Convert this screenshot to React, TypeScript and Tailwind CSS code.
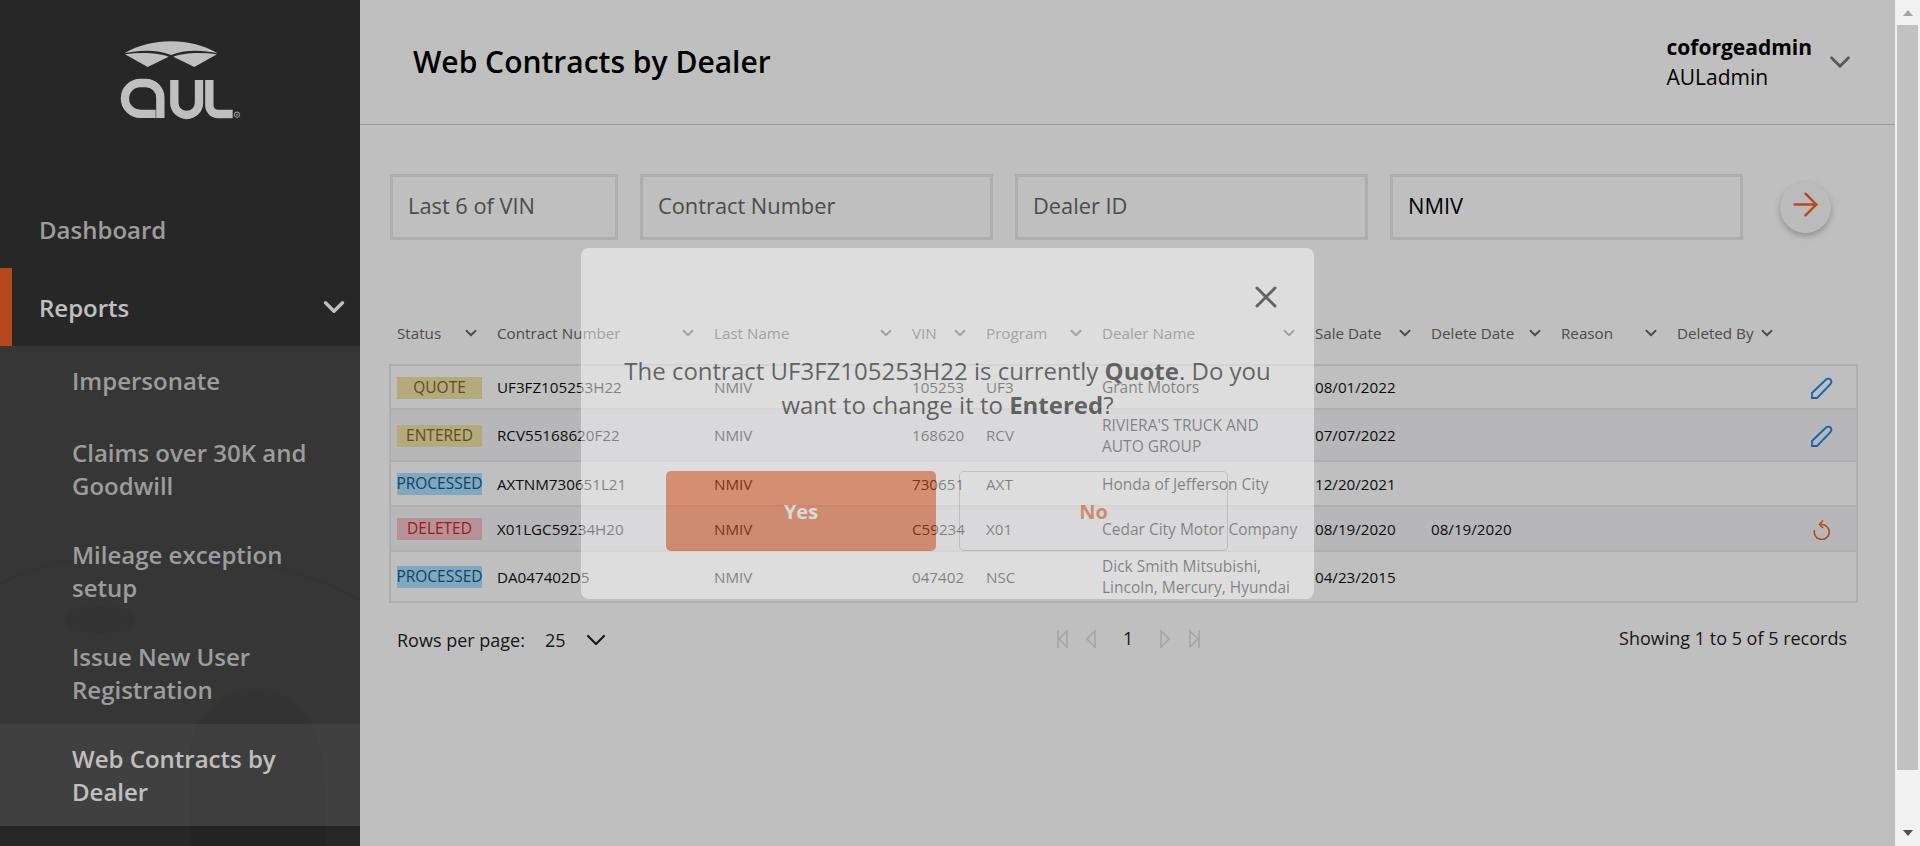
import { ChevronDown, X, ArrowRight } from 'lucide-react'

const font = { fontFamily: '"Open Sans", "Noto Sans", sans-serif' }

const columns = [
  { label: 'Status', w: 'w-[100px]' },
  { label: 'Contract Number', w: 'w-[217px]' },
  { label: 'Last Name', w: 'w-[198px]' },
  { label: 'VIN', w: 'w-[74px]' },
  { label: 'Program', w: 'w-[116px]' },
  { label: 'Dealer Name', w: 'w-[213px]' },
  { label: 'Sale Date', w: 'w-[116px]' },
  { label: 'Delete Date', w: 'w-[130px]' },
  { label: 'Reason', w: 'w-[116px]' },
  { label: 'Deleted By', w: 'w-[116px]' },
]

const badgeStyles: Record<string, string> = {
  QUOTE: 'bg-[#f2e3a4] text-[#7a6a24]',
  ENTERED: 'bg-[#f2e3a4] text-[#7a6a24]',
  PROCESSED: 'bg-[#abe0ff] text-[#0f5c8c]',
  DELETED: 'bg-[#f5c2c9] text-[#cf1f30]',
}

const rows = [
  { status: 'QUOTE', contract: 'UF3FZ105253H22', vin: '105253', program: 'UF3', dealer: ['Grant Motors'], sale: '08/01/2022', del: '', action: 'edit', h: 'h-[42px]', alt: false },
  { status: 'ENTERED', contract: 'RCV55168620F22', vin: '168620', program: 'RCV', dealer: ["RIVIERA'S TRUCK AND", 'AUTO GROUP'], sale: '07/07/2022', del: '', action: 'edit', h: 'h-[52px]', alt: true },
  { status: 'PROCESSED', contract: 'AXTNM730651L21', vin: '730651', program: 'AXT', dealer: ['Honda of Jefferson City'], sale: '12/20/2021', del: '', action: '', h: 'h-[45px]', alt: false },
  { status: 'DELETED', contract: 'X01LGC59234H20', vin: 'C59234', program: 'X01', dealer: ['Cedar City Motor Company'], sale: '08/19/2020', del: '08/19/2020', action: 'undo', h: 'h-[45px]', alt: true },
  { status: 'PROCESSED', contract: 'DA047402D5', vin: '047402', program: 'NSC', dealer: ['Dick Smith Mitsubishi,', 'Lincoln, Mercury, Hyundai'], sale: '04/23/2015', del: '', action: '', h: 'h-[51px]', alt: false },
]

function Logo() {
  return (
    <svg viewBox="0 0 480 300" className="h-[100px] w-[160px]" fill="none">
      <path d="M70 70C150 22 270 22 350 70C300 58 245 60 210 75C175 60 120 58 70 70Z" fill="#fff" />
      <path d="M72 73C120 66 172 68 203 80L140 111Z" fill="#fff" />
      <path d="M348 73C300 66 248 68 217 80L280 111Z" fill="#fff" />
      <g stroke="#fff" strokeWidth="25">
        <path d="M178 264V203a44 44 0 0 0-44-44h-16a46 46 0 0 0 0 92.500h46" />
        <path d="M220 150V218a37 37 0 0 0 74 0V150" />
        <path d="M325 150V226a26 26 0 0 0 26 26H395" />
      </g>
      <circle cx="408" cy="254" r="8" stroke="#fff" strokeWidth="2.500" />
      <circle cx="408" cy="254" r="2.500" fill="#fff" />
    </svg>
  )
}

function Sidebar() {
  const items = [
    { label: ['Impersonate'], h: 'h-[72px] pb-[3px]' },
    { label: ['Claims over 30K and', 'Goodwill'], h: 'h-[102px]' },
    { label: ['Mileage exception', 'setup'], h: 'h-[102px]' },
    { label: ['Issue New User', 'Registration'], h: 'h-[102px]' },
  ]
  return (
    <aside className="relative flex h-full w-[360px] shrink-0 flex-col bg-[#343434] text-[24px] leading-[33px] font-semibold text-[#d0d0d0]">
      <svg viewBox="0 0 360 686" className="absolute top-[160px] left-0 h-[686px] w-[360px]" fill="none">
        <path d="M0 425C60 385 240 375 360 440" stroke="#000" strokeOpacity="0.05" strokeWidth="3" />
        <ellipse cx="100" cy="460" rx="35" ry="15" fill="#000" fillOpacity="0.06" />
        <path d="M190 686V590C200 520 280 510 310 560C330 600 325 650 325 686Z" fill="#000" fillOpacity="0.07" />
      </svg>
      <div className="relative flex h-[160px] shrink-0 justify-center pt-[30px]">
        <div className="ml-[2px]">
          <Logo />
        </div>
      </div>
      <div className="relative flex h-[108px] shrink-0 items-center pt-[30px] pl-[39px]">Dashboard</div>
      <div className="relative flex h-[78px] shrink-0 items-center justify-between border-l-[12px] border-[#f56028] pr-[9px] pl-[27px] text-white">
        Reports
        <ChevronDown size={34} strokeWidth={2.400} />
      </div>
      <div className="relative bg-[#ffffff]/[0.10]">
        {items.map((item) => (
          <div key={item.label[0]} className={`flex ${item.h} flex-col justify-center pl-[72px]`}>
            {item.label.map((l) => (
              <span key={l}>{l}</span>
            ))}
          </div>
        ))}
        <div className="flex h-[102px] flex-col justify-center bg-white/[0.08] pl-[72px] text-white">
          <span>Web Contracts by</span>
          <span>Dealer</span>
        </div>
      </div>
    </aside>
  )
}

function Header() {
  return (
    <header className="flex h-[125px] shrink-0 items-center justify-between border-b border-[#cfcfcf] pr-[38px] pl-[53px]">
      <h1 className="-mt-[2px] text-[30px] font-semibold text-black">Web Contracts by Dealer</h1>
      <div className="flex items-center gap-[11px]">
        <div className="text-[21px] leading-[30px] text-black">
          <div className="font-bold">coforgeadmin</div>
          <div>AULadmin</div>
        </div>
        <ChevronDown size={34} className="text-[#777]" strokeWidth={2} />
      </div>
    </header>
  )
}

function Filters() {
  const inputs = [
    { label: 'Last 6 of VIN', w: 'w-[228px]' },
    { label: 'Contract Number', w: 'w-[353px]' },
    { label: 'Dealer ID', w: 'w-[353px]' },
  ]
  return (
    <div className="mt-[49px] flex items-center gap-[22px] pl-[30px]">
      {inputs.map((i) => (
        <div key={i.label} className={`flex h-[66px] ${i.w} items-center border-[3px] border-[#e8e8e8] pb-[1px] pl-[15px] text-[21.800px] font-medium text-[#666]`}>
          {i.label}
        </div>
      ))}
      <div className="flex h-[66px] w-[353px] items-center border-[3px] border-[#e8e8e8] pb-[1px] pl-[15px] text-[21.800px] font-medium text-black">NMIV</div>
      <div className="ml-[15px] flex h-[51px] w-[51px] items-center justify-center rounded-full bg-[#fafafa] shadow-[0_3px_6px_rgba(0,0,0,0.25)]">
        <ArrowRight size={37} className="-mt-[5px] text-[#f56028]" strokeWidth={1.600} />
      </div>
    </div>
  )
}

function PencilIcon() {
  return (
    <svg viewBox="0 0 22 22" className="h-[22px] w-[22px]" fill="none" stroke="#1b87e8" strokeWidth="1.800">
      <path d="M1 21V16L15 2.500a3 3 0 0 1 4.500 4.500L6 21Z" />
    </svg>
  )
}

function UndoIcon() {
  return (
    <svg viewBox="0 0 20 21" className="mr-[1px] h-[21px] w-[20px]" fill="none" stroke="#f56028" strokeWidth="1.600">
      <path d="M9 5.500A7.500 7.500 0 1 1 2.500 11" />
      <path d="M11 1.500L7.500 5.500L11 9" />
    </svg>
  )
}

function DataTable() {
  return (
    <div className="mt-[72px] pl-[29px] text-[15.200px]">
      <div className="flex h-[52px] items-start pt-[10px] pl-[8px] text-[#666]">
        {columns.map((c) => (
          <div key={c.label} className={`flex ${c.w} items-center justify-between pr-[17px]`}>
            <span>{c.label}</span>
            <ChevronDown size={18} strokeWidth={2.500} className="text-[#666]" />
          </div>
        ))}
      </div>
      <div className="w-[1469px] border-[2px] border-[#e8e8e8] bg-white">
        {rows.map((r, i) => (
          <div key={r.contract} className={`flex ${r.h} items-center pt-[1px] pl-[6px] text-[#111] ${i > 0 ? 'border-t-[2px] border-[#e8e8e8]' : ''} ${r.alt ? 'bg-[#f4f5f8]' : ''}`}>
            <div className="w-[100px]">
              <span className={`flex h-[22px] w-[85px] items-center justify-center text-[15.500px] ${badgeStyles[r.status]}`}>{r.status}</span>
            </div>
            <div className="w-[217px]">{r.contract}</div>
            <div className="w-[198px]">NMIV</div>
            <div className="w-[74px]">{r.vin}</div>
            <div className="w-[116px]">{r.program}</div>
            <div className="w-[213px] text-[15.500px] leading-[21px]">
              {r.dealer.map((d) => (
                <div key={d} className="whitespace-nowrap">{d}</div>
              ))}
            </div>
            <div className="w-[116px]">{r.sale}</div>
            <div className="w-[130px]">{r.del}</div>
            <div className="flex flex-1 justify-end pr-[23px]">
              {r.action === 'edit' && <PencilIcon />}
              {r.action === 'undo' && <UndoIcon />}
            </div>
          </div>
        ))}
      </div>
      <div className="mt-[18px] flex w-[1469px] items-center pr-[11px] pl-[8px] text-[#222]">
        <div className="flex w-[660px] items-center pt-[3px] text-[18px]">
          <span>Rows per page:</span>
          <span className="ml-[20px]">25</span>
          <ChevronDown size={32} strokeWidth={1.600} className="ml-[14px] text-[#222]" />
        </div>
        <svg viewBox="0 0 40 20" className="h-[20px] w-[40px]" fill="none" stroke="#dcdcdc" strokeWidth="1.600">
          <path d="M1 1v18M10 2L2 10l8 8Z" />
          <path d="M38 2l-8 8 8 8Z" />
        </svg>
        <span className="ml-[26px] w-[10px] text-[18px]">1</span>
        <svg viewBox="0 0 40 20" className="ml-[27px] h-[20px] w-[40px]" fill="none" stroke="#dcdcdc" strokeWidth="1.600">
          <path d="M1 2l8 8-8 8Z" />
          <path d="M30 2l8 8-8 8ZM39 1v18" />
        </svg>
        <span className="ml-auto text-[18px]">Showing 1 to 5 of 5 records</span>
      </div>
    </div>
  )
}

function Modal() {
  return (
    <div className="absolute top-[248px] left-[581px] z-20 h-[351px] w-[733px] rounded-[8px] bg-white text-black opacity-[0.48]">
      <div className="flex justify-end pt-[31px] pr-[30px]">
        <X size={36} strokeWidth={2} />
      </div>
      <p className="mx-auto mt-[39px] w-[700px] text-center text-[24px] leading-[34px]">
        The contract UF3FZ105253H22 is currently <b>Quote</b>. Do you
        <br />
        want to change it to <b>Entered</b>?
      </p>
      <div className="mt-[49px] flex justify-center gap-[23px] pr-[1px]">
        <div className="flex h-[80px] w-[270px] items-center justify-center rounded-[5px] bg-[#eb5c1f] pt-[1px] text-[20px] font-bold text-white">Yes</div>
        <div className="flex h-[80px] w-[269px] items-center justify-center rounded-[5px] border border-[#c4c4c4] pt-[1px] text-[20px] font-bold text-[#eb5c1f]">No</div>
      </div>
    </div>
  )
}

function Scrollbar() {
  return (
    <div className="flex w-[25px] shrink-0 flex-col bg-[#f1f1f1]">
      <div className="flex h-[25px] items-start justify-center pt-[10px]">
        <svg viewBox="0 0 10 6" className="h-[6px] w-[10px]" fill="#a3a3a3">
          <path d="M5 0L10 6H0Z" />
        </svg>
      </div>
      <div className="mx-[2px] h-[745px] bg-[#c1c1c1]" />
      <div className="flex flex-1 items-start justify-center pt-[60px]">
        <svg viewBox="0 0 10 6" className="h-[6px] w-[10px]" fill="#505050">
          <path d="M5 6L10 0H0Z" />
        </svg>
      </div>
    </div>
  )
}

export default function App() {
  return (
    <div className="relative flex h-[846px] w-[1920px] overflow-hidden bg-white" style={font}>
      <Sidebar />
      <main className="flex w-[1535px] shrink-0 flex-col">
        <Header />
        <Filters />
        <DataTable />
      </main>
      <Scrollbar />
      <div className="absolute inset-y-0 left-0 z-10 w-[1895px] bg-black/25" />
      <Modal />
    </div>
  )
}
